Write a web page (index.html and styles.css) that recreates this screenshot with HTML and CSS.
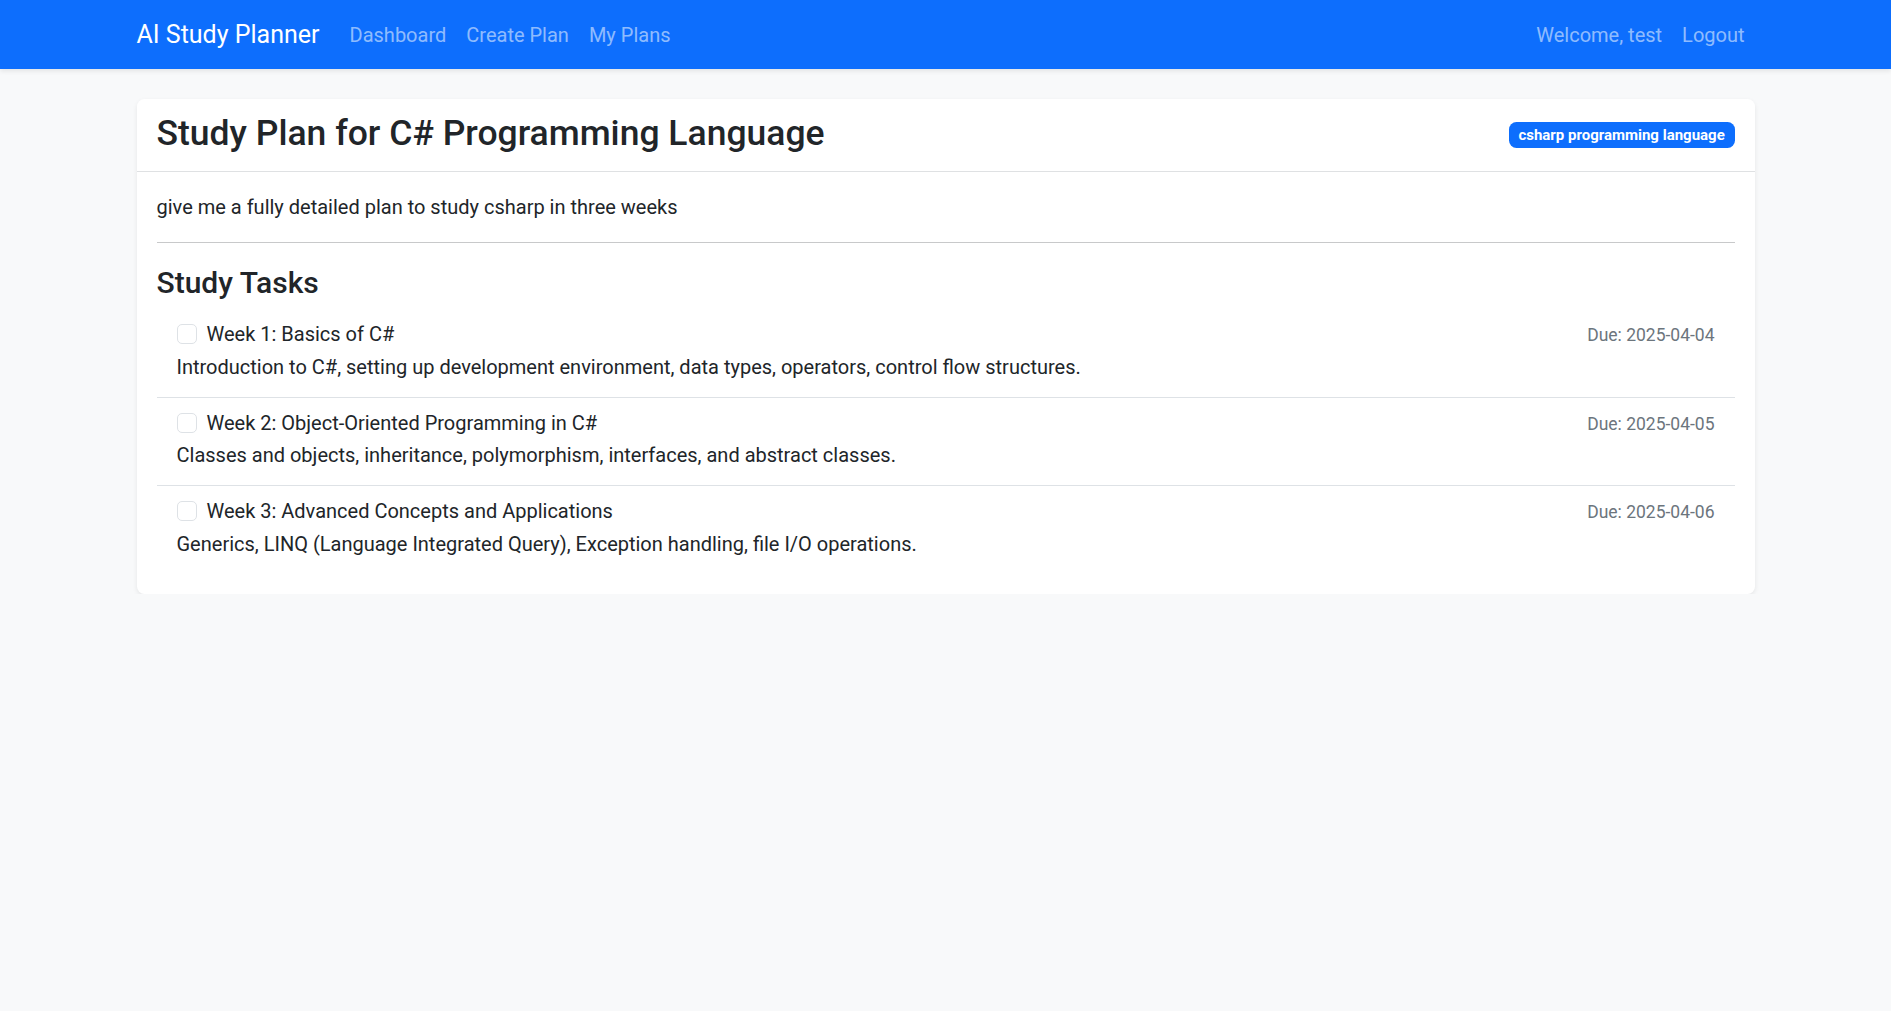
FILE: index.html
```html
<!DOCTYPE html>
<html lang="en">
<head>
<meta charset="utf-8">
<title>AI Study Planner</title>
<link rel="stylesheet" href="styles.css">
</head>
<body>
<nav class="navbar">
  <div class="container navbar-inner">
    <a class="brand" href="#">AI Study Planner</a>
    <ul class="nav">
      <li><a class="nav-link" href="#">Dashboard</a></li>
      <li><a class="nav-link" href="#">Create Plan</a></li>
      <li><a class="nav-link" href="#">My Plans</a></li>
    </ul>
    <ul class="nav nav-right">
      <li><span class="nav-link">Welcome, test</span></li>
      <li><a class="nav-link" href="#">Logout</a></li>
    </ul>
  </div>
</nav>

<main class="container main">
  <div class="card">
    <div class="card-header">
      <h3 class="plan-title">Study Plan for C# Programming Language</h3>
      <span class="badge">csharp programming language</span>
    </div>
    <div class="card-body">
      <p class="goal">give me a fully detailed plan to study csharp in three weeks</p>
      <hr class="divider">
      <h4 class="section-title">Study Tasks</h4>
      <ul class="task-list">
        <li class="task">
          <div class="task-row">
            <label class="form-check">
              <input type="checkbox" class="check">
              <span class="task-name">Week 1: Basics of C#</span>
            </label>
            <small class="due">Due: 2025-04-04</small>
          </div>
          <p class="task-desc">Introduction to C#, setting up development environment, data types, operators, control flow structures.</p>
        </li>
        <li class="task">
          <div class="task-row">
            <label class="form-check">
              <input type="checkbox" class="check">
              <span class="task-name">Week 2: Object-Oriented Programming in C#</span>
            </label>
            <small class="due">Due: 2025-04-05</small>
          </div>
          <p class="task-desc">Classes and objects, inheritance, polymorphism, interfaces, and abstract classes.</p>
        </li>
        <li class="task">
          <div class="task-row">
            <label class="form-check">
              <input type="checkbox" class="check">
              <span class="task-name">Week 3: Advanced Concepts and Applications</span>
            </label>
            <small class="due">Due: 2025-04-06</small>
          </div>
          <p class="task-desc">Generics, LINQ (Language Integrated Query), Exception handling, file I/O operations.</p>
        </li>
      </ul>
    </div>
  </div>
</main>
</body>
</html>
```
FILE: styles.css
```css
* { box-sizing: border-box; }

body {
  margin: 0;
  background: #f8f9fa;
  color: #212529;
  font-family: Roboto, "Liberation Sans", sans-serif;
  font-size: 20px;
  line-height: 1.5;
}

.container {
  max-width: 1648px;
  margin: 0 auto;
  padding: 0 15px;
}

/* Navbar */
.navbar {
  background: #0d6efd;
  padding: 9.5px 0;
  box-shadow: 0 2px 5px rgba(0, 0, 0, 0.09);
}

.navbar-inner {
  display: flex;
  align-items: center;
}

.brand {
  color: #fff;
  text-decoration: none;
  font-size: 25px;
  line-height: 37.5px;
  padding: 6.25px 0;
  margin-right: 20px;
}

.nav {
  display: flex;
  list-style: none;
  margin: 0;
  padding: 0;
}

.nav-right {
  margin-left: auto;
}

.nav-link {
  display: block;
  padding: 10px;
  color: rgba(255, 255, 255, 0.55);
  text-decoration: none;
}

/* Main */
.main {
  margin-top: 30px;
}

.card {
  background: #fff;
  border-radius: 7.5px;
  box-shadow: 0 2px 5px rgba(0, 0, 0, 0.08);
}

.card-header {
  display: flex;
  justify-content: space-between;
  align-items: center;
  padding: 10px 20px;
  border-bottom: 1px solid #dfe1e3;
}

.plan-title {
  margin: 0;
  padding: 3px 0 7px;
  font-size: 35.5px;
  font-weight: 500;
  line-height: 42px;
}

.badge {
  display: inline-block;
  background: #0d6efd;
  color: #fff;
  font-size: 15px;
  font-weight: 700;
  line-height: 1;
  padding: 5.25px 9.75px;
  border-radius: 7.5px;
  white-space: nowrap;
}

.card-body {
  padding: 20px;
}

.goal {
  margin: 0 0 20px;
}

.divider {
  margin: 20px 0 22px;
  border: 0;
  border-top: 1.25px solid #c8c9ca;
}

.section-title {
  margin: 0 0 8px;
  font-size: 30px;
  font-weight: 500;
  line-height: 36px;
}

.task-list {
  list-style: none;
  margin: 0;
  padding: 0;
}

.task {
  padding: 10px 20px;
  border-bottom: 1px solid #dee2e6;
}

.task:last-child {
  border-bottom: 0;
}

.task-row {
  display: flex;
  justify-content: space-between;
  align-items: center;
}

.form-check {
  display: block;
  min-height: 30px;
  padding-left: 30px;
  margin-bottom: 2.5px;
}

.check {
  appearance: none;
  -webkit-appearance: none;
  float: left;
  width: 20px;
  height: 20px;
  margin: 5px 0 0 -30px;
  border: 1.25px solid #dee2e6;
  border-radius: 5px;
  background: #fff;
}

.due {
  font-size: 17.5px;
  color: #6c757d;
}

.task-desc {
  margin: 0 0 5px;
}
```
